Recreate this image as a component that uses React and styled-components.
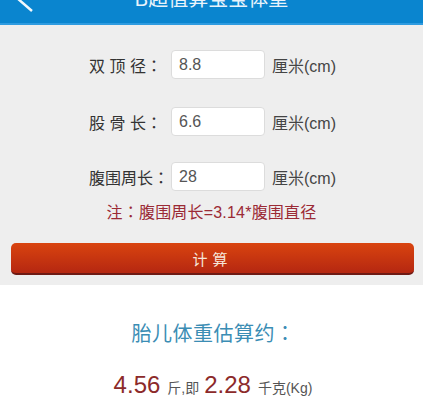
import React from "react";
import styled, { createGlobalStyle } from "styled-components";

const Global = createGlobalStyle`
  html, body { margin: 0; padding: 0; background: #fff; }
  body { font-family: "Liberation Sans", "Noto Sans CJK TC", sans-serif; }
`;

const Page = styled.div`
  width: 423px;
  height: 400px;
  overflow: hidden;
  background: #fff;
`;

const Header = styled.div`
  height: 23px;
  background: #0a85cf;
  border-bottom: 2px solid #2e9be0;
  display: flex;
  align-items: flex-start;
  overflow: hidden;
  position: relative;
`;

const Back = styled.svg`
  width: 30px;
  height: 23px;
  margin-left: 8px;
  flex: none;
`;

const Title = styled.div`
  flex: 1;
  margin-left: -38px;
  margin-top: -11px;
  text-align: center;
  color: #e8f3fb;
  font-size: 20px;
  line-height: 20px;
`;

const Form = styled.div`
  background: #eeeeee;
  padding: 25px 0 10px;
  display: flex;
  flex-direction: column;
  align-items: center;
`;

const Row = styled.div`
  display: flex;
  align-items: center;
  height: 29px;
  margin-bottom: ${(p) => p.$gap}px;
  padding-left: 2px;
`;

const Label = styled.span`
  width: 82px;
  font-size: 16px;
  color: #333;
`;

const Field = styled.div`
  width: 85px;
  height: 27px;
  background: #fff;
  border: 1px solid #dcdcdc;
  border-radius: 4px;
  padding-left: 7px;
  display: flex;
  align-items: center;
  font-size: 16px;
  color: #555;
`;

const Unit = styled.span`
  margin-left: 7px;
  font-size: 16px;
  color: #444;
`;

const Note = styled.div`
  margin-top: 8px;
  font-size: 16px;
  color: #9b2a35;
  letter-spacing: 0.2px;
`;

const Calc = styled.div`
  margin: 20px 9px 0 11px;
  align-self: stretch;
  height: 30px;
  border-radius: 5px;
  background: linear-gradient(#d9440f, #b52711);
  border-bottom: 2px solid #6e1a14;
  display: flex;
  align-items: center;
  justify-content: center;
  color: #f6e6da;
  font-size: 15px;
  letter-spacing: 5px;
`;

const Result = styled.div`
  display: flex;
  flex-direction: column;
  align-items: center;
  padding-top: 33px;
`;

const ResultTitle = styled.div`
  font-size: 20px;
  color: #3b8db4;
  letter-spacing: 0.5px;
  margin-left: 4px;
`;

const ResultLine = styled.div`
  margin-top: 24px;
  display: flex;
  align-items: baseline;
  color: #555;
`;

const Num = styled.span`
  font-size: 24px;
  color: #8c2a2a;
  margin: 0 7px 0 ${(p) => p.$ml}px;
`;

const Small = styled.span`
  font-size: 14px;
  color: #555;
`;

const rows = [
  { label: "双 顶 径：", value: "8.8", gap: 28 },
  { label: "股 骨 长：", value: "6.6", gap: 26 },
  { label: "腹围周长：", value: "28", gap: 0 },
];

export default function App() {
  return (
    <Page>
      <Global />
      <Header>
        <Back viewBox="0 0 30 23">
          <polyline
            points="22,-14 9,-2 24,11"
            fill="none"
            stroke="#f2f8fc"
            strokeWidth="2.5"
          />
        </Back>
        <Title>B超值算宝宝体重</Title>
      </Header>
      <Form>
        {rows.map((r) => (
          <Row key={r.label} $gap={r.gap}>
            <Label>{r.label}</Label>
            <Field>{r.value}</Field>
            <Unit>厘米(cm)</Unit>
          </Row>
        ))}
        <Note>注：腹围周长=3.14*腹围直径</Note>
        <Calc>计算</Calc>
      </Form>
      <Result>
        <ResultTitle>胎儿体重估算约：</ResultTitle>
        <ResultLine>
          <Num $ml={3}>4.56</Num>
          <Small>斤,即</Small>
          <Num $ml={5}>2.28</Num>
          <Small>千克(Kg)</Small>
        </ResultLine>
      </Result>
    </Page>
  );
}
